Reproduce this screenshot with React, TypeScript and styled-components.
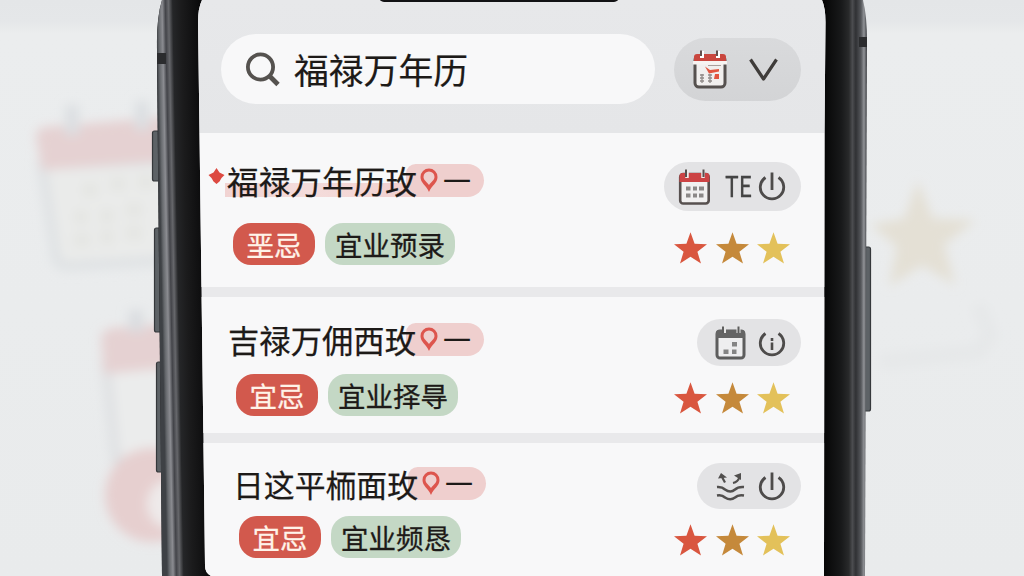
import React from 'react';
import styled, { createGlobalStyle } from 'styled-components';

const GlobalStyle = createGlobalStyle`
	* {
		box-sizing: border-box;
	}
	body {
		margin: 0;
		font-family: "Noto Sans CJK SC", sans-serif;
		color: #1d1a18;
	}
`

const Stage = styled.div`
	position: relative;
	width: 1024px;
	height: 576px;
	overflow: hidden;
	background: linear-gradient(#e4e6e8 0, #e5e7e9 22px, #ebedee 34px, #e9ebec 100%);
`
const Scenery = styled.svg`
	position: absolute;
	inset: 0;
`
const Screen = styled.main`
	position: relative;
	display: flex;
	flex-direction: column;
	gap: 10px;
	width: 628px;
	height: 576px;
	margin-left: 198px;
	background: #e9e9eb;
	clip-path: path("M4 0 Q0 8 0 22 L1.5 133 L7 566 Q7 573 13 576 L626 576 L626.5 133 L627.5 22 Q627.5 8 624 0 Z");
`
const Header = styled.header`
	display: flex;
	align-items: flex-start;
	gap: 19px;
	height: 133px;
	margin-bottom: -10px;
	padding: 34px 0 0 23px;
	background: linear-gradient(#e7e8ea, #e5e6e8);
`
const SearchBar = styled.div`
	display: flex;
	align-items: center;
	gap: 11px;
	width: 434px;
	height: 70px;
	padding-left: 24px;
	border-radius: 35px;
	background: #f8f8f9;
	font-size: 34.8px;
	line-height: 70px;
	-webkit-text-stroke: 0.2px;
`
const SearchText = styled.span`
	height: 70px;
`
const FilterButton = styled.div`
	display: flex;
	align-items: center;
	gap: 20px;
	width: 127px;
	height: 63px;
	margin-top: 4px;
	padding: 0 0 2px 17px;
	border-radius: 32px;
	background: linear-gradient(#d9dadc, #d3d4d6);
`
const Card = styled.section<{ $height: number; $top: number }>`
	display: flex;
	justify-content: space-between;
	height: ${(p) => p.$height}px;
	padding: ${(p) => p.$top}px 25px 0 0;
	background: #f8f8f9;
`
const Info = styled.div`
	display: flex;
	flex-direction: column;
`
const TitleRow = styled.div<{ $indent: number; $streak: boolean }>`
	display: flex;
	align-items: center;
	height: 33px;
	padding-left: ${(p) => p.$indent}px;
	background: ${(p) => p.$streak ? 'linear-gradient(90deg, #f1d3d2, #f4dcdb 45%, #f0cfce) 27px 100% / 190px 14px no-repeat' : 'none'};
`
const Title = styled.h2<{ $width: number }>`
	z-index: 1;
	width: ${(p) => p.$width}px;
	margin: 0;
	padding-bottom: 1px;
	font-size: ${(p) => p.$width / 6}px;
	font-weight: 400;
	line-height: 33px;
	white-space: nowrap;
	-webkit-text-stroke: 0.25px;
`
const PinTag = styled.div<{ $overlap: number }>`
	display: flex;
	align-items: center;
	gap: 4px;
	width: 78px;
	height: 33px;
	margin-left: -${(p) => p.$overlap}px;
	padding-left: 13px;
	border-radius: 10px 17px 17px 10px;
	background: #efcfce;
	font-size: 28px;
	line-height: 32px;
`
const Dash = styled.span`
	height: 33px;
`
const Chips = styled.div<{ $indent: number; $gap: number }>`
	display: flex;
	gap: 10px;
	padding-left: ${(p) => p.$indent}px;
	margin-top: ${(p) => p.$gap}px;
`
const Chip = styled.span<{ $tone: 'red' | 'green' }>`
	display: flex;
	justify-content: center;
	width: ${(p) => p.$tone === 'red' ? 82 : 130}px;
	height: 42px;
	border-radius: 18px;
	background: ${(p) => p.$tone === 'red' ? '#d2594d' : '#c4d8c5'};
	color: ${(p) => p.$tone === 'red' ? '#fff3e9' : '#1d1a18'};
	font-size: 27.5px;
	line-height: 42px;
	-webkit-text-stroke: 0.3px;
`
const Side = styled.div<{ $gap: number }>`
	display: flex;
	flex-direction: column;
	align-items: flex-end;
	gap: ${(p) => p.$gap}px;
`
const ActionPill = styled.div<{ $wide: boolean; $height: number }>`
	display: flex;
	align-items: center;
	justify-content: flex-end;
	gap: ${(p) => p.$wide ? 7 : 11}px;
	width: ${(p) => p.$wide ? 137 : 104}px;
	height: ${(p) => p.$height}px;
	padding: 1px 14px 0 0;
	border-radius: 25px;
	background: #e3e3e5;
`
const PillText = styled.span`
	width: 26px;
	margin: -4px 0 0 7px;
	font-size: 28px;
	line-height: 30px;
	color: #444;
	transform: scaleX(.82);
	transform-origin: left;
	-webkit-text-stroke: 0.3px;
`
const Stars = styled.div`
	display: flex;
	gap: 8.5px;
	padding-right: 11px;
`

const STAR = 'M16.5 0.300L20.600 11.800L33 12.200L23.400 19.800L27 31.500L16.500 24.800L6 31.500L9.600 19.800L0 12.200L12.400 11.800Z'
const starColors = ['#d9563f', '#c5893b', '#e3c15a']

type IconKind = 'red' | 'grey' | 'wave'
type Entry = {
	title: string
	titleWidth: number
	indent: number
	overlap: number
	chipIndent: number
	tags: [string, string]
	icon: IconKind
	label?: string
	height: number
	top: number
	chipGap: number
	pillDrop: number
	pillHeight: number
	starGap: number
}

const entries: Entry[] = [
	{ title: '福禄万年历玫', titleWidth: 190, indent: 10, overlap: 11, chipIndent: 35, tags: ['垩忌', '宜业预录'], icon: 'red', label: 'TE',
		height: 154, top: 31, chipGap: 26, pillDrop: -2, pillHeight: 49, starGap: 21 },
	{ title: '吉禄万佣西玫', titleWidth: 188, indent: 30, overlap: 10, chipIndent: 38, tags: ['宜忌', '宜业择㝵'], icon: 'grey',
		height: 136, top: 26, chipGap: 18, pillDrop: -4, pillHeight: 47, starGap: 16 },
	{ title: '日这平栭面玫', titleWidth: 185, indent: 35, overlap: 10, chipIndent: 41, tags: ['宜忌', '宜业频恳'], icon: 'wave',
		height: 133, top: 24, chipGap: 16, pillDrop: -4, pillHeight: 46, starGap: 15 },
]

const SearchIcon = () => (
	<svg width="38" height="38" viewBox="0 0 38 38" fill="none" stroke="#55524f">
		<circle cx="15.500" cy="17" r="12.600" strokeWidth="3.800" />
		<path d="M24 25.500L33 34.500" strokeWidth="4.800" />
	</svg>
)

const HeaderCalendar = () => (
	<svg width="38" height="42" viewBox="0 0 38 42">
		<rect x="4" y="8" width="30" height="31" rx="4" fill="#f1efee" stroke="#56514f" strokeWidth="3" />
		<path d="M3 14V9Q3 6 6 6H32Q35 6 35 9V14Z" fill="#c9463e" />
		<path d="M2 13H36V16.500H2Z" fill="#f7f3f1" />
		<path d="M11 10V3M27 10V3" stroke="#fff" strokeWidth="4" />
		<path d="M10 8V2.500M26 8V2.500" stroke="#64504e" strokeWidth="2" />
		<path d="M17 17.500H30" stroke="#a99f9c" strokeWidth="1" />
		<path d="M14 18.500L19 22L28 21V23.500L18 25.500Z" fill="#e2553f" />
		<path d="M24 26H28V31H23Z" fill="#e2553f" />
		<path d="M9 27H13M9 30H13M9 33H13M11 26V35M17 27H21M17 30H21M17 33H21M19 26V35" stroke="#918b89" strokeWidth="1.300" />
	</svg>
)

const RedCalendar = () => (
	<svg width="33" height="38" viewBox="0 0 33 38">
		<rect x="2.200" y="6" width="28.500" height="29.500" rx="3" fill="#f1f0f0" stroke="#57504f" strokeWidth="2.600" />
		<path d="M1.500 14V8Q1.500 5 4.500 5H28.500Q31.500 5 31.500 8V14Z" fill="#cc4344" />
		<path d="M9 10V2M25 10V2" stroke="#efe9e8" strokeWidth="3.500" />
		<path d="M8 9V1.500M25.500 9V1.500" stroke="#57504f" strokeWidth="2" />
		<path d="M8 18.500h4.500v4h-4.500zM15 18.500h4v4h-4zM21 18.500h5v4h-5zM8 25.500h4.500v4h-4.500zM15 25.500h4v4h-4zM21 25.500h4.500v4h-4.500z" fill="#8b8887" />
	</svg>
)

const GreyCalendar = () => (
	<svg width="33" height="36" viewBox="0 0 33 36">
		<rect x="3" y="6" width="27" height="27" rx="3" fill="#eeeeef" stroke="#5d5d5d" strokeWidth="3" />
		<path d="M2 13V8Q2 5 5 5H28Q31 5 31 8V13Z" fill="#646464" />
		<path d="M10 8V1M24.500 8V1" stroke="#e6e6e6" strokeWidth="4" />
		<path d="M9 8V1.500M24.500 8V1.500" stroke="#5d5d5d" strokeWidth="2" />
		<path d="M18 17h5v4.500h-5zM9.500 24.500h5v4.500h-5zM18 24.500h4.500v4.500h-4.500z" fill="#858585" />
	</svg>
)

const WaveIcon = () => (
	<svg width="32" height="34" viewBox="0 0 32 34" fill="none" stroke="#514f4e" strokeWidth="2.500">
		<path d="M2 17Q7 16.500 10 19.500Q15.500 23.500 20 19.500Q23 16.500 29 17" />
		<path d="M2 25.500Q7 24.500 10 27.500Q15.500 31 20 27.500Q23 24.500 29 25.500" />
		<path d="M10 12.500L7 7M18 13Q23 12 24.500 7" strokeWidth="2.200" />
		<path d="M6 3L12 7.500L3 8.500ZM26 3V10L19 5.500Z" fill="#514f4e" stroke="none" />
	</svg>
)

const PowerIcon = ({ short }: { short?: boolean }) => (
	<svg width="29" height="32" viewBox="0 0 29 32" fill="none" stroke="#4d4b4a" strokeWidth="2.800">
		<path d="M7.500 6.500A11.700 11.700 0 1 0 20.500 6.500" />
		{short ? <path d="M14 11V14M14 15.500V23" strokeWidth="2.600" /> : <path d="M14 1.500V19" />}
	</svg>
)

const PinIcon = () => (
	<svg width="20" height="26" viewBox="0 0 20 26">
		<path fillRule="evenodd" fill="#dd554d" d="M10 0.500A8.500 8.500 0 0 1 18.500 9C18.500 15 13 17 10 24C7 17 1.500 15 1.500 9A8.500 8.500 0 0 1 10 0.500ZM10 3.500A5.500 5.500 0 0 0 4.500 9C4.500 12 7.500 13.500 10 17C12.500 13.500 15.500 12 15.500 9A5.500 5.500 0 0 0 10 3.500Z" />
	</svg>
)

// Blurred objects lying behind the phone
const Backdrop = () => (
	<Scenery width="1024" height="576" viewBox="0 0 1024 576">
		<defs>
			<filter id="soft" x="-20%" y="-20%" width="140%" height="140%">
				<feGaussianBlur stdDeviation="5.500" />
			</filter>
		</defs>
		<g filter="url(#soft)">
			<path d="M42 165L56 258Q58 266 68 266L180 260V160Z" fill="#eaebea" stroke="#dfe2e4" strokeWidth="10" />
			<path d="M36 136Q36 128 45 127L180 116V160L42 170Z" fill="#e5d1d2" />
			<path d="M72 105V135M142 101V130" stroke="#dcdfe2" strokeWidth="14" />
			<path d="M82 190h16M110 184h16M138 182h16M74 217h14M100 216h14M126 210h16M74 240h16M100 237h14M126 233h16" stroke="#e4e5e2" strokeWidth="14" />
			<path d="M106 365L116 460H190V360Z" fill="#ebecec" stroke="#dfe1e3" strokeWidth="10" />
			<path d="M101 338Q102 330 112 328L190 322V366L104 374Z" fill="#e5d1d2" />
			<path d="M136 310V332" stroke="#dadde0" strokeWidth="15" />
			<circle cx="152" cy="495" r="47" fill="#e6cfcf" />
			<circle cx="172" cy="504" r="25" fill="#eeeaea" />
			<path d="M918 186L931 220L970 222L942 244L952 281L922 263L892 282L899 246L875 226L906 220Z" fill="#e4e0d5" stroke="#e4e0d5" strokeWidth="4" />
			<path d="M978 305L990 335L978 352L880 362" fill="none" stroke="#e6e8e9" strokeWidth="16" />
		</g>
	</Scenery>
)

const PhoneBody = () => (
	<Scenery width="1024" height="576" viewBox="0 0 1024 576">
		<defs>
			<linearGradient id="leftEdge" gradientUnits="userSpaceOnUse" x1="156" x2="202" y1="0" y2="-0.450">
				<stop offset="0" stopColor="#3e4145" />
				<stop offset=".05" stopColor="#65686c" />
				<stop offset=".13" stopColor="#8b8c91" />
				<stop offset=".2" stopColor="#434449" />
				<stop offset=".27" stopColor="#66676b" />
				<stop offset=".36" stopColor="#252628" />
				<stop offset=".55" stopColor="#1b1b1c" />
				<stop offset="1" stopColor="#080809" />
			</linearGradient>
			<linearGradient id="rightEdge" gradientUnits="userSpaceOnUse" x1="824" x2="867" y1="0" y2="0">
				<stop offset="0" stopColor="#060606" />
				<stop offset=".4" stopColor="#18191a" />
				<stop offset=".58" stopColor="#292a2b" />
				<stop offset=".66" stopColor="#4c4d50" />
				<stop offset=".74" stopColor="#303134" />
				<stop offset=".86" stopColor="#55575b" />
				<stop offset=".93" stopColor="#929498" />
				<stop offset="1" stopColor="#3a3c40" />
			</linearGradient>
		</defs>
		<g fill="#5d6266" stroke="#35383b" strokeWidth="1.200">
			<rect x="152.500" y="131" width="7" height="50" rx="2" />
			<rect x="154.500" y="228" width="7" height="104" rx="2" />
			<rect x="156.500" y="362" width="7" height="110" rx="2" />
			<rect x="863" y="247" width="7.500" height="164" rx="2" />
		</g>
		<path d="M162 0Q157 16 157 42V60L162 576H520V0Z" fill="#1c1c1e" />
		<g transform="skewX(0.550)">
			<path d="M162 0Q157 16 156.500 42L156.500 576H215V0Z" fill="url(#leftEdge)" />
		</g>
		<path d="M520 0H863Q867 16 867 42L865 576H520Z" fill="url(#rightEdge)" />
		<path d="M157 53H166V64H157ZM859 37H867V47H859Z" fill="#2b2c2e" />
	</Scenery>
)

const NotchBar = styled.div`
	position: absolute;
	top: -8px;
	left: 181px;
	width: 240px;
	height: 10px;
	border-radius: 6px;
	background: #121214;
`
const Spark = styled.svg<{ $show: boolean }>`
	display: ${(p) => p.$show ? 'block' : 'none'};
	flex: none;
	margin: -9px 2px 0 0;
`
const PillSlot = styled.div<{ $drop: number }>`
	margin-top: ${(p) => p.$drop}px;
`

const EntryCard: React.FC<{ entry: Entry }> = ({ entry }) => {
	const first = entry.label !== undefined

	return (
		<Card $height={entry.height} $top={entry.top}>
			<Info>
				<TitleRow $indent={entry.indent} $streak={first}>
					<Spark $show={first} width="17" height="18" viewBox="0 0 16 18">
						<path d="M8 1L11 5.500L16 8L13 11L11 14.500L8 17L5 14.500L3 11L0 8L5 5.500Z" fill="#dd4a42" />
					</Spark>
					<Title $width={entry.titleWidth}>{entry.title}</Title>
					<PinTag $overlap={entry.overlap}>
						<PinIcon />
						<Dash>一</Dash>
					</PinTag>
				</TitleRow>
				<Chips $indent={entry.chipIndent} $gap={entry.chipGap}>
					<Chip $tone="red">{entry.tags[0]}</Chip>
					<Chip $tone="green">{entry.tags[1]}</Chip>
				</Chips>
			</Info>
			<Side $gap={entry.starGap}>
				<PillSlot $drop={entry.pillDrop}>
					<ActionPill $wide={first} $height={entry.pillHeight}>
						{entry.icon === 'red' && <RedCalendar />}
						{entry.icon === 'grey' && <GreyCalendar />}
						{entry.icon === 'wave' && <WaveIcon />}
						{entry.label && <PillText>{entry.label}</PillText>}
						<PowerIcon short={entry.icon === 'grey'} />
					</ActionPill>
				</PillSlot>
				<Stars>
					{starColors.map((color) => (
						<svg key={color} width="33" height="32" viewBox="0 0 33 32">
							<path d={STAR} fill={color} />
						</svg>
					))}
				</Stars>
			</Side>
		</Card>
	)
}

const App: React.FC = () => {
	return (
		<Stage>
			<GlobalStyle />
			<Backdrop />
			<PhoneBody />
			<Screen>
				<Header>
					<SearchBar>
						<SearchIcon />
						<SearchText>福禄万年历</SearchText>
					</SearchBar>
					<FilterButton>
						<HeaderCalendar />
						<svg width="29" height="26" viewBox="0 0 29 26" fill="none" stroke="#3f3c3a" strokeWidth="3.200">
							<path d="M1.500 3.500L14.500 23L27.500 3.500" strokeLinejoin="round" />
						</svg>
					</FilterButton>
				</Header>
				{entries.map((entry) => (
					<EntryCard key={entry.title} entry={entry} />
				))}
				<NotchBar />
			</Screen>
		</Stage>
	)
}

export default App
